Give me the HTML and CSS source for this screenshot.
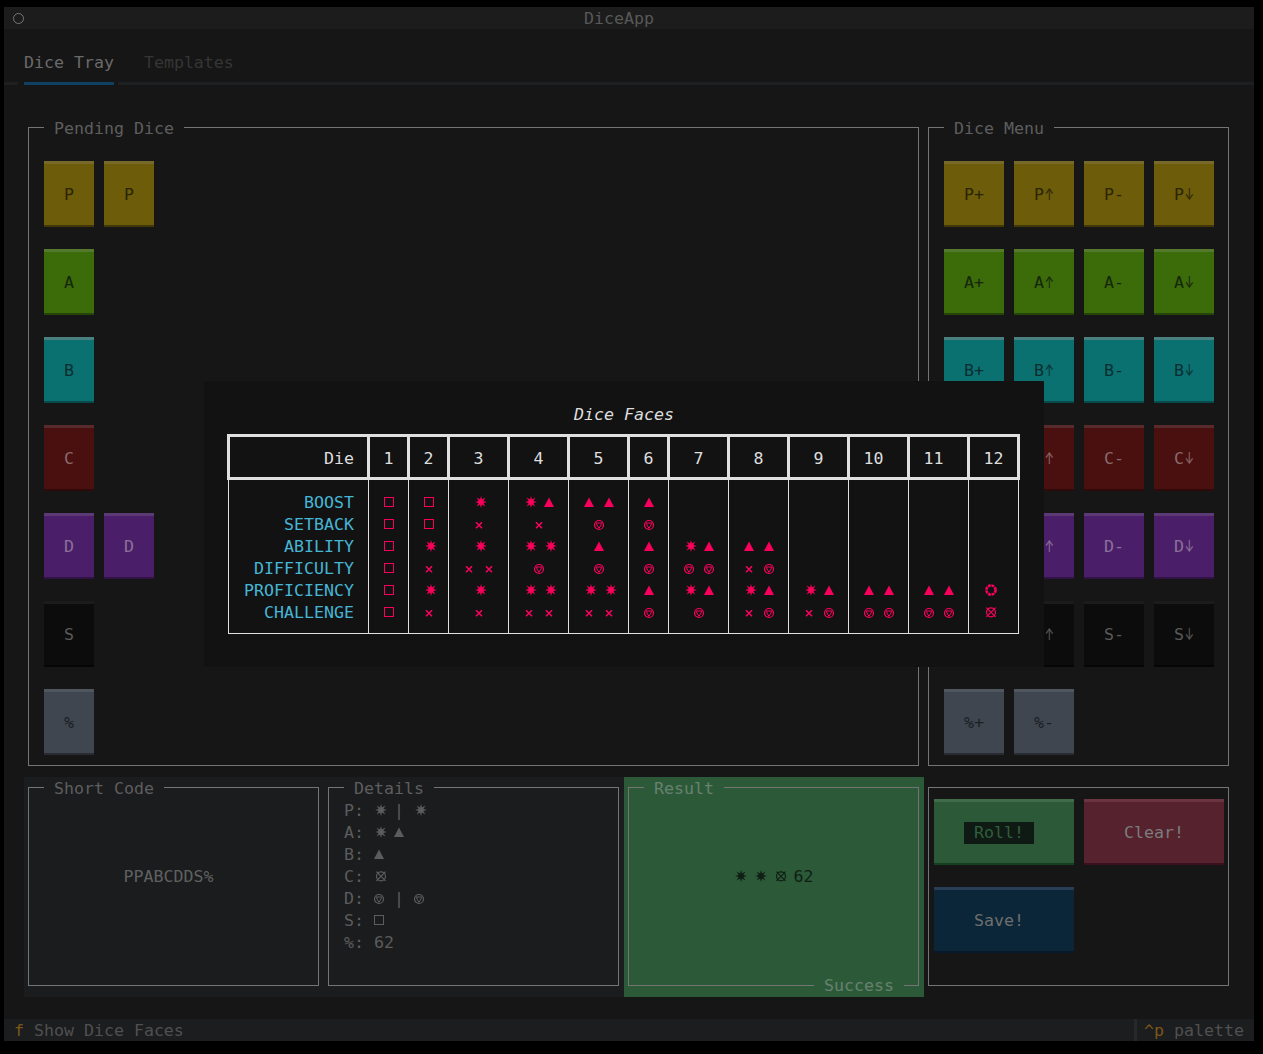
FILE: index.html
```html
<!DOCTYPE html>
<html lang="en">
<head>
<meta charset="utf-8">
<title>DiceApp</title>
<link rel="stylesheet" href="styles.css">
</head>
<body>
<svg class="defs" width="0" height="0" aria-hidden="true"><defs>
<polygon id="star" transform="translate(7 11)" points="6,0 2.4,1 4.4,4.4 1,2.4 0,6 -1,2.4 -4.4,4.4 -2.4,1 -6,0 -2.4,-1 -4.4,-4.4 -1,-2.4 0,-6 1,-2.4 4.4,-4.4 2.4,-1"/>
<path id="tri" d="M5 6.6 10 16H0Z"/>
<rect id="sq" x=".5" y="6.5" width="9" height="9" fill="none" stroke="currentColor"/>
<path id="x" d="M2 9.2 8 15.2M8 9.2 2 15.2" fill="none" stroke="currentColor" stroke-width="1.6"/>
<g id="circ" fill="none" stroke="currentColor" stroke-width="1.2"><circle cx="5" cy="12" r="4.5"/><path d="M2 10H8L5 15.4Z" stroke-width="1"/></g>
<circle id="ring" cx="7" cy="11" r="4.6" fill="none" stroke="currentColor" stroke-width="2.6" stroke-dasharray="2.8 .8"/>
<g id="cross" fill="none" stroke="currentColor" stroke-width="1.2"><circle cx="7" cy="11.3" r="4.5"/><path d="M2.4 6.7 11.6 15.9M11.6 6.7 2.4 15.9"/></g>
</defs></svg>

<div class="window">
  <header class="titlebar"><span class="app-icon"></span><span class="app-title">DiceApp</span></header>

  <nav class="tabs">
    <div class="tab-labels"><span class="tab active">Dice Tray</span><span class="tab">Templates</span></div>
    <div class="tab-rule"><span class="rule r1"></span><span class="rule r2"></span><span class="rule r3"></span></div>
  </nav>

  <main class="workspace">
    <section class="cell pending-cell">
      <div class="panel pending">
        <span class="panel-title">Pending Dice</span>
        <div class="die-row"><button class="die p">P</button><button class="die p">P</button></div>
        <div class="die-row"><button class="die a">A</button></div>
        <div class="die-row"><button class="die b">B</button></div>
        <div class="die-row"><button class="die c">C</button></div>
        <div class="die-row"><button class="die d">D</button><button class="die d">D</button></div>
        <div class="die-row"><button class="die s">S</button></div>
        <div class="die-row"><button class="die pc">%</button></div>
      </div>
    </section>

    <section class="cell menu-cell">
      <div class="panel menu">
        <span class="panel-title">Dice Menu</span>
        <button class="die wide p">P+</button><button class="die wide p">P<span class="arr">↑</span></button><button class="die wide p">P-</button><button class="die wide p">P<span class="arr">↓</span></button>
        <button class="die wide a">A+</button><button class="die wide a">A<span class="arr">↑</span></button><button class="die wide a">A-</button><button class="die wide a">A<span class="arr">↓</span></button>
        <button class="die wide b">B+</button><button class="die wide b">B<span class="arr">↑</span></button><button class="die wide b">B-</button><button class="die wide b">B<span class="arr">↓</span></button>
        <button class="die wide c">C+</button><button class="die wide c">C<span class="arr">↑</span></button><button class="die wide c">C-</button><button class="die wide c">C<span class="arr">↓</span></button>
        <button class="die wide d">D+</button><button class="die wide d">D<span class="arr">↑</span></button><button class="die wide d">D-</button><button class="die wide d">D<span class="arr">↓</span></button>
        <button class="die wide s">S+</button><button class="die wide s">S<span class="arr">↑</span></button><button class="die wide s">S-</button><button class="die wide s">S<span class="arr">↓</span></button>
        <button class="die wide pc">%+</button><button class="die wide pc">%-</button>
      </div>
    </section>

    <section class="cell info-cell">
      <div class="panel centered">
        <span class="panel-title info-title">Short Code</span>
        <span class="code">PPABCDDS%</span>
      </div>
    </section>

    <section class="cell info-cell">
      <div class="panel details">
        <span class="panel-title info-title">Details</span>
        <div class="line">P: <svg class="g"><use href="#star"/></svg> | <svg class="g"><use href="#star"/></svg></div>
        <div class="line">A: <svg class="g"><use href="#star"/></svg> <svg class="g"><use href="#tri"/></svg></div>
        <div class="line">B: <svg class="g"><use href="#tri"/></svg></div>
        <div class="line">C: <svg class="g"><use href="#cross"/></svg></div>
        <div class="line">D: <svg class="g"><use href="#circ"/></svg> | <svg class="g"><use href="#circ"/></svg></div>
        <div class="line">S: <svg class="g"><use href="#sq"/></svg></div>
        <div class="line">%: 62</div>
      </div>
    </section>

    <section class="cell result-cell">
      <div class="panel centered result">
        <span class="panel-title result-title">Result</span>
        <span class="result-value"><svg class="g"><use href="#star"/></svg> <svg class="g"><use href="#star"/></svg> <svg class="g"><use href="#cross"/></svg> 62</span>
        <span class="panel-title result-sub">Success</span>
      </div>
    </section>

    <section class="cell actions-cell">
      <div class="panel actions">
        <button class="die act roll"><span class="roll-label">Roll!</span></button>
        <button class="die act clear">Clear!</button>
        <button class="die act save">Save!</button>
      </div>
    </section>
  </main>

  <footer class="footer">
    <span class="key">f</span><span class="key-label">Show Dice Faces</span>
    <span class="palette"><span class="key">^p</span><span class="key-label">palette</span></span>
  </footer>

  <div class="modal">
    <div class="modal-title">Dice Faces</div>
    <table class="faces">
      <colgroup><col class="w14"><col class="w4"><col class="w4"><col class="w6"><col class="w6"><col class="w6"><col class="w4"><col class="w6"><col class="w6"><col class="w6"><col class="w6"><col class="w6"><col class="w5"></colgroup>
      <thead>
        <tr><th class="name">Die</th><th>1</th><th>2</th><th>3</th><th>4</th><th>5</th><th>6</th><th>7</th><th>8</th><th>9</th><th class="l">10</th><th class="l">11</th><th>12</th></tr>
      </thead>
      <tbody>
        <tr class="gap top"><td></td><td></td><td></td><td></td><td></td><td></td><td></td><td></td><td></td><td></td><td></td><td></td><td></td></tr>
        <tr><td class="name"><div class="lbl">BOOST</div></td>
          <td><svg class="g"><use href="#sq"/></svg></td>
          <td><svg class="g"><use href="#sq"/></svg></td>
          <td><svg class="g"><use href="#star"/></svg></td>
          <td><svg class="g"><use href="#star"/></svg> <svg class="g"><use href="#tri"/></svg></td>
          <td><svg class="g"><use href="#tri"/></svg> <svg class="g"><use href="#tri"/></svg></td>
          <td><svg class="g"><use href="#tri"/></svg></td>
          <td></td><td></td><td></td><td></td><td></td><td></td></tr>
        <tr><td class="name"><div class="lbl">SETBACK</div></td>
          <td><svg class="g"><use href="#sq"/></svg></td>
          <td><svg class="g"><use href="#sq"/></svg></td>
          <td><svg class="g"><use href="#x"/></svg></td>
          <td><svg class="g"><use href="#x"/></svg></td>
          <td><svg class="g"><use href="#circ"/></svg></td>
          <td><svg class="g"><use href="#circ"/></svg></td>
          <td></td><td></td><td></td><td></td><td></td><td></td></tr>
        <tr><td class="name"><div class="lbl">ABILITY</div></td>
          <td><svg class="g"><use href="#sq"/></svg></td>
          <td><svg class="g"><use href="#star"/></svg></td>
          <td><svg class="g"><use href="#star"/></svg></td>
          <td><svg class="g"><use href="#star"/></svg> <svg class="g"><use href="#star"/></svg></td>
          <td><svg class="g"><use href="#tri"/></svg></td>
          <td><svg class="g"><use href="#tri"/></svg></td>
          <td><svg class="g"><use href="#star"/></svg> <svg class="g"><use href="#tri"/></svg></td>
          <td><svg class="g"><use href="#tri"/></svg> <svg class="g"><use href="#tri"/></svg></td>
          <td></td><td></td><td></td><td></td></tr>
        <tr><td class="name"><div class="lbl">DIFFICULTY</div></td>
          <td><svg class="g"><use href="#sq"/></svg></td>
          <td><svg class="g"><use href="#x"/></svg></td>
          <td><svg class="g"><use href="#x"/></svg> <svg class="g"><use href="#x"/></svg></td>
          <td><svg class="g"><use href="#circ"/></svg></td>
          <td><svg class="g"><use href="#circ"/></svg></td>
          <td><svg class="g"><use href="#circ"/></svg></td>
          <td><svg class="g"><use href="#circ"/></svg> <svg class="g"><use href="#circ"/></svg></td>
          <td><svg class="g"><use href="#x"/></svg> <svg class="g"><use href="#circ"/></svg></td>
          <td></td><td></td><td></td><td></td></tr>
        <tr><td class="name"><div class="lbl">PROFICIENCY</div></td>
          <td><svg class="g"><use href="#sq"/></svg></td>
          <td><svg class="g"><use href="#star"/></svg></td>
          <td><svg class="g"><use href="#star"/></svg></td>
          <td><svg class="g"><use href="#star"/></svg> <svg class="g"><use href="#star"/></svg></td>
          <td><svg class="g"><use href="#star"/></svg> <svg class="g"><use href="#star"/></svg></td>
          <td><svg class="g"><use href="#tri"/></svg></td>
          <td><svg class="g"><use href="#star"/></svg> <svg class="g"><use href="#tri"/></svg></td>
          <td><svg class="g"><use href="#star"/></svg> <svg class="g"><use href="#tri"/></svg></td>
          <td><svg class="g"><use href="#star"/></svg> <svg class="g"><use href="#tri"/></svg></td>
          <td><svg class="g"><use href="#tri"/></svg> <svg class="g"><use href="#tri"/></svg></td>
          <td><svg class="g"><use href="#tri"/></svg> <svg class="g"><use href="#tri"/></svg></td>
          <td class="l"><svg class="g"><use href="#ring"/></svg></td></tr>
        <tr><td class="name"><div class="lbl">CHALLENGE</div></td>
          <td><svg class="g"><use href="#sq"/></svg></td>
          <td><svg class="g"><use href="#x"/></svg></td>
          <td><svg class="g"><use href="#x"/></svg></td>
          <td><svg class="g"><use href="#x"/></svg> <svg class="g"><use href="#x"/></svg></td>
          <td><svg class="g"><use href="#x"/></svg> <svg class="g"><use href="#x"/></svg></td>
          <td><svg class="g"><use href="#circ"/></svg></td>
          <td><svg class="g"><use href="#circ"/></svg></td>
          <td><svg class="g"><use href="#x"/></svg> <svg class="g"><use href="#circ"/></svg></td>
          <td><svg class="g"><use href="#x"/></svg> <svg class="g"><use href="#circ"/></svg></td>
          <td><svg class="g"><use href="#circ"/></svg> <svg class="g"><use href="#circ"/></svg></td>
          <td><svg class="g"><use href="#circ"/></svg> <svg class="g"><use href="#circ"/></svg></td>
          <td class="l"><svg class="g"><use href="#cross"/></svg></td></tr>
        <tr class="gap"><td></td><td></td><td></td><td></td><td></td><td></td><td></td><td></td><td></td><td></td><td></td><td></td><td></td></tr>
      </tbody>
    </table>
  </div>
</div>
</body>
</html>
```

FILE: styles.css
```css
* { box-sizing: border-box; }

html, body { margin: 0; padding: 0; background: #000; }

body {
  font-family: "DejaVu Sans Mono", "Liberation Mono", monospace;
  font-size: 16.6px;
  line-height: 24px;
  color: #5c5c5c;
}

.defs { position: absolute; }

.g {
  display: inline-block;
  width: 10px;
  height: 22px;
  overflow: visible;
  vertical-align: top;
  fill: currentColor;
}

.window {
  position: relative;
  width: 1250px;
  height: 1034px;
  margin: 7px 0 0 4px;
  background: #161616;
  display: flex;
  flex-direction: column;
}

.titlebar {
  height: 22px;
  flex: none;
  background: #1c1c1c;
  display: flex;
  align-items: flex-start;
  justify-content: center;
  position: relative;
  color: #585858;
}

.app-title { padding-right: 20px; }

.app-icon {
  position: absolute;
  left: 9px;
  top: 6px;
  width: 11px;
  height: 11px;
  border: 1.5px solid #767676;
  border-radius: 50%;
}

.tabs { height: 88px; flex: none; }

.tab-labels { display: flex; gap: 30px; height: 44px; padding: 22px 0 0 20px; }

.tab { color: #353535; }
.tab.active { color: #6a6a6a; }

.tab-rule { display: flex; height: 3px; margin-top: 9px; }
.rule { height: 3px; background: #1d1f21; }
.r1 { width: 14px; margin-right: 6px; }
.r2 { width: 90px; margin-right: 4px; background: #0f3f61; }
.r3 { flex: 1; }

.workspace {
  display: grid;
  grid-template-columns: 300px 300px 300px 310px;
  grid-template-rows: 660px 220px;
  margin-left: 20px;
  flex: none;
}

.cell { padding: 10px 5px 11px 4px; }
.pending-cell { grid-column: 1 / 4; }
.info-cell { background: #1a1c1e; }
.result-cell { background: #2c5a39; }

.panel {
  position: relative;
  height: 100%;
  border: 1px solid #747474;
}

.panel-title {
  position: absolute;
  top: -11px;
  left: 15px;
  height: 22px;
  padding: 0 10px;
  background: #161616;
  color: #5e5e5e;
}

.info-title { background: #1a1c1e; }
.result-title { background: #2c5a39; color: #67816f; }
.result-sub {
  top: auto;
  left: auto;
  bottom: -11px;
  right: 14px;
  background: #2c5a39;
  color: #67816f;
}

.pending { padding: 33px 0 0 15px; display: flex; flex-direction: column; gap: 22px; }
.die-row { display: flex; gap: 10px; }

.menu {
  padding: 33px 0 0 15px;
  display: grid;
  grid-template-columns: repeat(4, 60px);
  grid-auto-rows: 66px;
  gap: 22px 10px;
}

.die {
  width: 50px;
  height: 66px;
  padding: 0;
  margin: 0;
  border-width: 3px 0 2px;
  border-style: solid;
  border-radius: 0;
  font: inherit;
  line-height: 22px;
  text-align: center;
}

.die.wide { width: 60px; }

.arr {
  display: inline-block;
  width: 10px;
  margin-left: -1px;
  margin-right: 1px;
  font-family: Inter, "DejaVu Sans", sans-serif;
  font-size: 16px;
  text-align: center;
  white-space: nowrap;
  transform: scaleX(.72);
}

.p  { background: #6d5c0a; border-color: #77692a #000 #423708; color: #2b2404; }
.a  { background: #3c6b0a; border-color: #55792c #000 #254408; color: #15260a; }
.b  { background: #0b7070; border-color: #4a8080 #000 #064a4a; color: #0a2e30; }
.c  { background: #4a0f0f; border-color: #572b2b #000 #2e0a0a; color: #8a6a6a; }
.d  { background: #4b1e6a; border-color: #5b3a76 #000 #301344; color: #8a7298; }
.s  { background: #0c0c0c; border-color: #1c1c1c #000 #060606; color: #5a5a5a; }
.pc { background: #3f4650; border-color: #50565e #000 #282c32; color: #1c1f24; }

.centered { display: flex; align-items: center; justify-content: center; padding-bottom: 20px; }
.code { padding-right: 10px; color: #606060; }

.details { padding: 11px 0 0 15px; color: #5c5c5c; }
.line { height: 22px; white-space: pre; }

.result-value { color: #0f1f14; display: block; white-space: pre; }

.actions {
  padding: 11px 0 0 5px;
  display: grid;
  grid-template-columns: repeat(2, 140px);
  grid-auto-rows: 66px;
  gap: 22px 10px;
  align-content: start;
}

.die.act { width: 140px; }
.roll  { background: #2c5a39; border-color: #3f6b49 #000 #14401f; padding-right: 10px; }
.roll-label { display: inline-block; width: 70px; background: #0f1a14; color: #2f5f3c; }
.clear { background: #55222e; border-color: #6c3341 #000 #3a1020; color: #7c7c7c; }
.save  { background: #0a2638; border-color: #2a3d56 #000 #081a2a; color: #6e6e6e; padding-right: 10px; }

.footer {
  margin-top: 22px;
  height: 22px;
  flex: none;
  background: #1b1d1f;
  display: flex;
  padding-left: 10px;
}

.key { color: #7c5718; margin-right: 10px; }
.key-label { color: #505050; }

.palette {
  margin-left: auto;
  border-left: 3px solid #26282a;
  padding: 0 10px 0 7px;
}

.modal {
  position: absolute;
  left: 200px;
  top: 374px;
  width: 840px;
  height: 286px;
  background: #121212;
  padding-top: 22px;
  color: #dedede;
}

.modal-title { text-align: center; font-style: italic; height: 22px; }

.faces {
  border-collapse: collapse;
  table-layout: fixed;
  width: 790px;
  margin: 9px 0 0 23px;
}

.w14 { width: 140px; }
.w4 { width: 40px; }
.w5 { width: 50px; }
.w6 { width: 60px; }

.faces th {
  height: 43px;
  padding: 4px 0 0;
  border: 3px solid #e0e0e0;
  font-weight: normal;
  text-align: center;
  line-height: 22px;
}

.faces td {
  height: 22px;
  padding: 0;
  border-left: 1px solid #e0e0e0;
  border-right: 1px solid #e0e0e0;
  text-align: center;
  color: #fa005c;
  white-space: pre;
  line-height: 22px;
}

.faces .gap td { height: 11px; line-height: 11px; }
.faces .gap.top td { height: 12px; line-height: 12px; }
.faces tr:last-child td { border-bottom: 1px solid #e0e0e0; }

.faces th.name { text-align: right; padding-right: 13px; }
.faces td.name { text-align: right; padding-right: 14px; color: #46b6d6; }
.lbl { height: 22px; line-height: 24px; }
.faces .l { padding-right: 10px; }
```
